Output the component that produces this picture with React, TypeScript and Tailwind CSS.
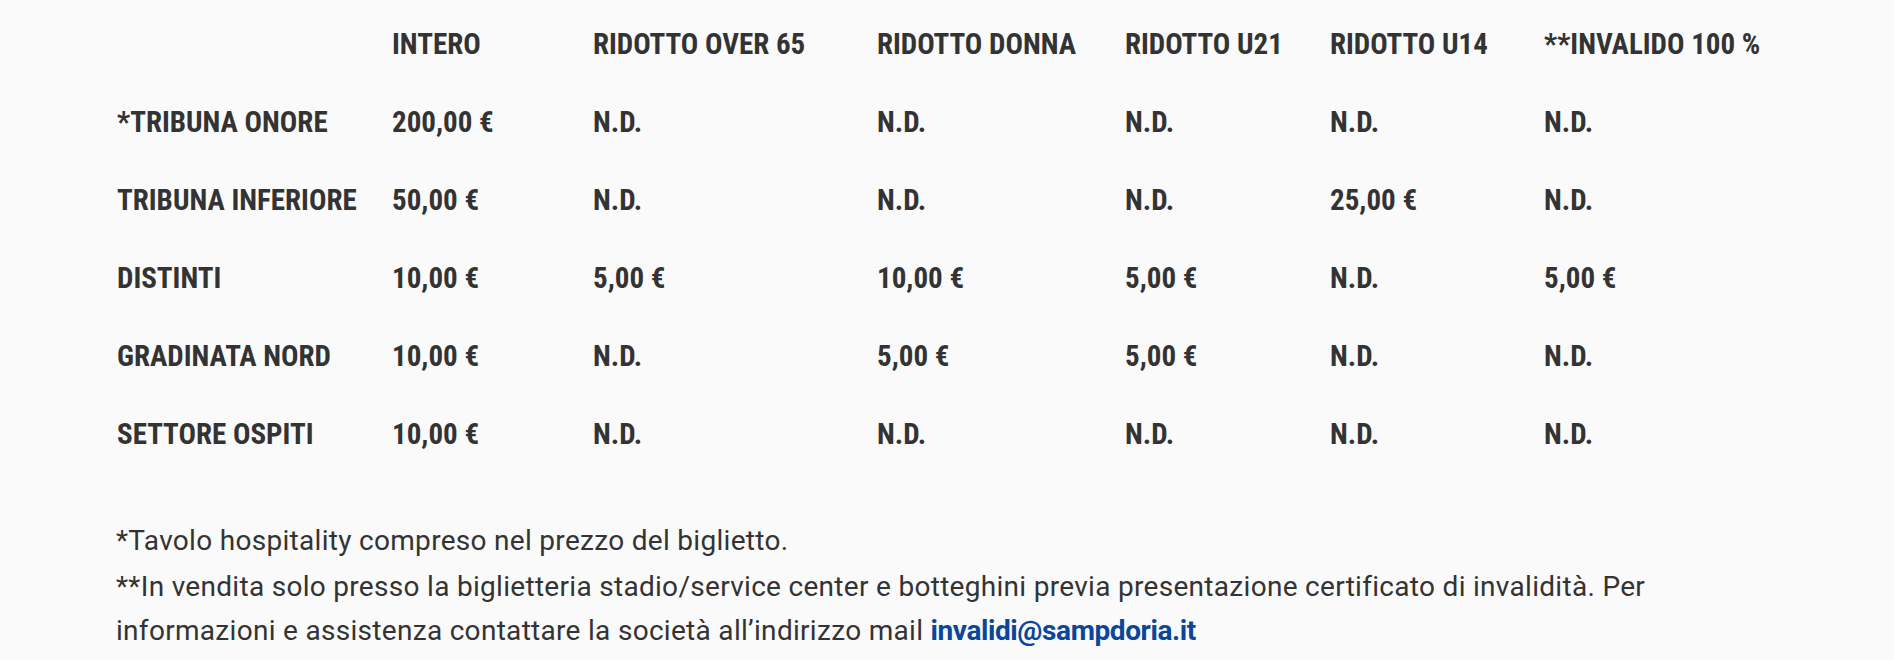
const COLUMNS = ["", "Intero", "Ridotto over 65", "Ridotto donna", "Ridotto U21", "Ridotto U14", "**Invalido 100 %"];

const ROWS: { sector: string; prices: string[] }[] = [
  { sector: "*Tribuna onore", prices: ["200,00 €", "N.D.", "N.D.", "N.D.", "N.D.", "N.D."] },
  { sector: "Tribuna inferiore", prices: ["50,00 €", "N.D.", "N.D.", "N.D.", "25,00 €", "N.D."] },
  { sector: "Distinti", prices: ["10,00 €", "5,00 €", "10,00 €", "5,00 €", "N.D.", "5,00 €"] },
  { sector: "Gradinata nord", prices: ["10,00 €", "N.D.", "5,00 €", "5,00 €", "N.D.", "N.D."] },
  { sector: "Settore ospiti", prices: ["10,00 €", "N.D.", "N.D.", "N.D.", "N.D.", "N.D."] },
];

function Cell({ children }: { children: string }) {
  return (
    <div className="h-[78px] whitespace-nowrap font-['Roboto_Condensed','Liberation_Sans_Narrow',Roboto,sans-serif] text-[29px] font-bold uppercase leading-[29px]">
      {children}
    </div>
  );
}

export default function App() {
  return (
    <div className="min-h-[660px] w-full bg-[#fafafa] pl-[117px] pt-[30px] text-[#333333]">
      <div className="grid grid-cols-[275px_201px_284px_248px_205px_214px_1fr]">
        {COLUMNS.map((c, i) => (
          <Cell key={i}>{c}</Cell>
        ))}
        {ROWS.map((r) => [
          <Cell key={r.sector}>{r.sector}</Cell>,
          ...r.prices.map((p, i) => <Cell key={r.sector + i}>{p}</Cell>),
        ])}
      </div>

      <div className="-ml-px mt-[21px] font-['Roboto','Noto_Sans',sans-serif] text-[28px] leading-[44px] tracking-[0.3px]">
        <p className="mb-[2px]">*Tavolo hospitality compreso nel prezzo del biglietto.</p>
        <p>
          **In vendita solo presso la biglietteria stadio/service center e botteghini previa presentazione certificato
          di invalidità. Per
          <br />
          informazioni e assistenza contattare la società all’indirizzo mail{" "}
          <a href="#" className="font-bold tracking-[-0.4px] text-[#0a479a]">
            invalidi@sampdoria.it
          </a>
        </p>
      </div>
    </div>
  );
}
